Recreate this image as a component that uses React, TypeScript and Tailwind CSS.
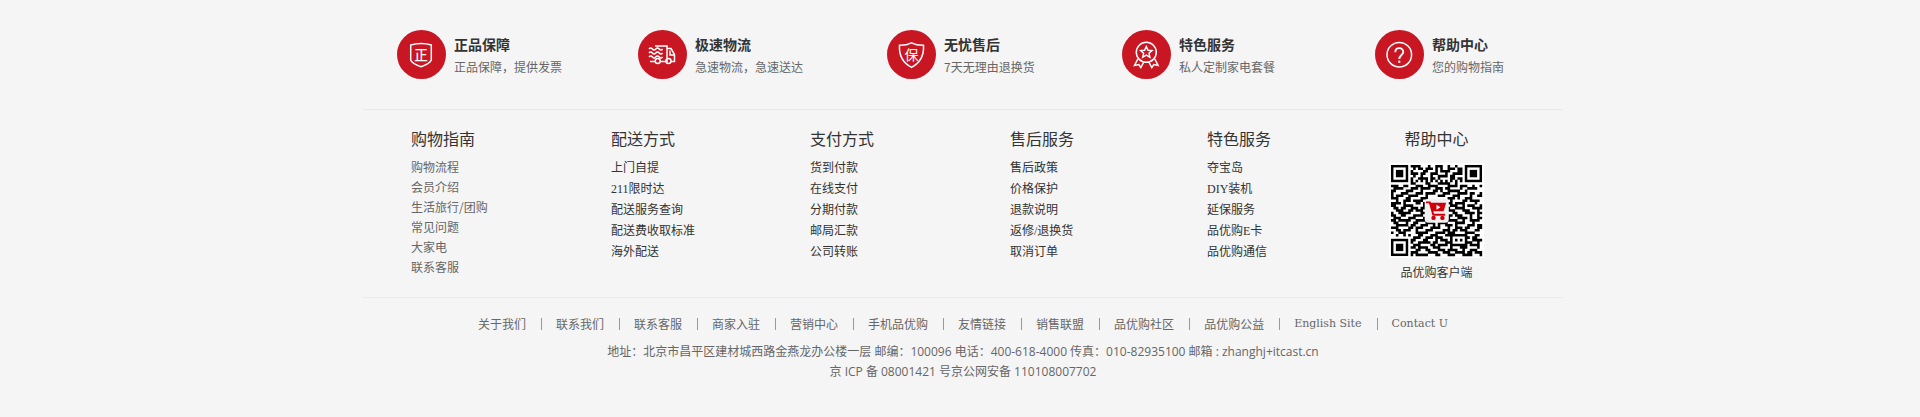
import type { ReactNode } from "react";

const SANS = "font-['Open_Sans','Noto_Sans_CJK_SC',sans-serif]";
const CJK = "font-['Noto_Sans_CJK_SC',sans-serif]";
const SERIF = "font-['Liberation_Serif','Noto_Sans_CJK_SC',serif]";

const shieldIcon = (
  <>
    <path d="M13.7 15Q24.5 12 34.3 15V30Q33 33.5 24 36.7Q15 33.5 13.7 30Z" />
    <text x="24" y="29.5" fontSize="13.5" textAnchor="middle" fill="#fff" stroke="none" fontWeight="500">
      正
    </text>
  </>
);

const truckIcon = (
  <>
    <path d="M17 16H29V31.5H22.5M29 18.5H33L36.5 24.5V31.5H33M28 31.5H29M12 31.5H17" />
    <path d="M32 20.5V25H36" />
    <circle cx="19.7" cy="31" r="2.5" />
    <circle cx="30.5" cy="31" r="2.5" />
    <path d="M11 19q1.7-2 3.4 0t3.4 0t3.400 0t3.400 0M11 23q1.700-2 3.400 0t3.400 0t3.400 0t3.400 0M11 27q1.700-2 3.400 0t3.400 0t3.400 0t3.400 0" />
  </>
);

const warrantyIcon = (
  <>
    <path d="M24.5 12.8Q30 15.5 36.5 15.2Q37.5 30.5 24.5 37.3Q11.5 30.5 12.5 15.2Q19 15.5 24.5 12.8Z" />
    <text x="24.5" y="29.5" fontSize="14" textAnchor="middle" fill="#fff" stroke="none">
      保
    </text>
  </>
);

const medalIcon = (
  <>
    <circle cx="24.3" cy="22.3" r="10" />
    <path d="M24.3 16.5l1.7 3.7l4 .4l-3 2.7l.9 4l-3.6-2.1l-3.6 2.1l.9-4l-3-2.7l4-.4z" />
    <path d="M15.8 29L12.5 35.500L16.800 34.600L18.800 37.500L21.800 32M32.800 29L36.100 35.500L31.800 34.600L29.800 37.500L26.800 32" />
  </>
);

const helpIcon = (
  <>
    <circle cx="24.3" cy="24.7" r="12.3" />
    <path strokeWidth="1.8" d="M20.3 22.2C20.3 16.8 28.3 16.8 28.3 22C28.3 25 24.3 25.2 24.3 29" />
    <path strokeWidth="2" d="M24.3 30.6V32.8" />
  </>
);

const services: { title: string; text: string; icon: ReactNode }[] = [
  { title: "正品保障", text: "正品保障，提供发票", icon: shieldIcon },
  { title: "极速物流", text: "急速物流，急速送达", icon: truckIcon },
  { title: "无忧售后", text: "7天无理由退换货", icon: warrantyIcon },
  { title: "特色服务", text: "私人定制家电套餐", icon: medalIcon },
  { title: "帮助中心", text: "您的购物指南", icon: helpIcon },
];

const guide = {
  title: "购物指南",
  links: ["购物流程", "会员介绍", "生活旅行/团购", "常见问题", "大家电", "联系客服"],
};

const columns = [
  { title: "配送方式", links: ["上门自提", "211限时达", "配送服务查询", "配送费收取标准", "海外配送"] },
  { title: "支付方式", links: ["货到付款", "在线支付", "分期付款", "邮局汇款", "公司转账"] },
  { title: "售后服务", links: ["售后政策", "价格保护", "退款说明", "返修/退换货", "取消订单"] },
  { title: "特色服务", links: ["夺宝岛", "DIY装机", "延保服务", "品优购E卡", "品优购通信"] },
];

const siteLinks = [
  "关于我们", "联系我们", "联系客服", "商家入驻", "营销中心", "手机品优购",
  "友情链接", "销售联盟", "品优购社区", "品优购公益",
];

const modules = [
  "0000000011110001001110010010000000000",
  "0000000001011011101010011101100000000",
  "0000000010000110001011110001100000000",
  "0000000011101100111000100111100000000",
  "0000000001001000100111101100000000000",
  "0000000010011110110100001101100000000",
  "0000000010101010101010101010100000000",
  "0000000011000011000111110010000000000",
  "1110011000111001111000011110111001001",
  "0111100011101111001110110000100111100",
  "1100001110001000011010011111001000000",
  "1000111000111011110001110001111011001",
  "1011100111100010000111000111000010011",
  "1110001100001110000000011101001110000",
  "0010011101111000000000001000011011110",
  "1111010000110110000000011011110000100",
  "1100011110000110000000001110010111001",
  "0110110011101100000000010011110001111",
  "0011100110111000000000011100011100010",
  "1001111100001110000000000110001111011",
  "1100110001111010000000011011100010010",
  "0111000111000110000000010001111010011",
  "1101111100111100000000011110010011110",
  "0110001001100011110111100011110001000",
  "0011111011001110010100111010000111011",
  "1110000110111000111100010011101100011",
  "0011011100100011100001110110111000110",
  "1001110000111110001111011100001111000",
  "0010010100011000111000111111111000110",
  "0000000001110011101110001000001101100",
  "0000000011000110001011101010101001111",
  "0000000010011111011000111000001110010",
  "0000000001110000110111101111111011110",
  "0000000011011110011100001000111000010",
  "0000000000110011000111011110010011100",
  "0000000011100001111001110011110110111",
  "0000000010111110001100011100011110001",
];

const finders = [[0, 0], [30, 0], [0, 30]];

function QrCode() {
  return (
    <svg viewBox="-0.8 -0.8 38.6 38.6" className="h-[95px] w-[95px] bg-white" role="img" aria-label="品优购客户端">
      <path
        fill="#000"
        d={modules
          .flatMap((row, y) => row.split("").map((bit, x) => (bit === "1" ? `M${x} ${y}h1.05v1.05h-1.05z` : "")))
          .join("")}
      />
      {finders.map(([x, y]) => (
        <g key={`${x}-${y}`}>
          <rect x={x + 0.5} y={y + 0.5} width="6" height="6" fill="#fff" stroke="#000" />
          <rect x={x + 2} y={y + 2} width="3" height="3" fill="#000" />
        </g>
      ))}
      <rect x="13.7" y="13.7" width="9.8" height="9.8" rx="1.5" fill="#f1f1f1" />
      <path d="M14.2 15.2h1.6l1.4 5h4.8" fill="none" stroke="#d0000b" strokeWidth=".8" />
      <path d="M15.8 15.4h6.600l-1 3.400h-4.700z" fill="#d0000b" />
      <path d="M18.5 16.200v2l1.600-1z" fill="#fff" />
      <circle cx="17.300" cy="21.500" r=".9" fill="#d0000b" />
      <circle cx="20.900" cy="21.500" r=".9" fill="#d0000b" />
    </svg>
  );
}

export default function App() {
  return (
    <footer className={`min-h-screen bg-[#f5f5f5] pl-[6px] text-xs text-[#666] ${CJK}`}>
      <div className="mx-auto max-w-[1200px]">
        <ul className="grid grid-cols-[241fr_249fr_235fr_253fr_188fr] border-b border-[#eaeaea] pt-[30px] pb-[30px] pl-[34px]">
          {services.map((s) => (
            <li key={s.title} className="flex gap-2">
              <svg viewBox="0 0 49 49" className="h-[49px] w-[49px] shrink-0" fill="none" stroke="#fff" strokeWidth="1.5" aria-hidden="true">
                <circle cx="24.5" cy="24.5" r="24.5" fill="#c81623" stroke="none" />
                {s.icon}
              </svg>
              <div className="pt-[3px]">
                <h2 className="text-sm leading-[22px] font-bold text-[#333]">{s.title}</h2>
                <p className="leading-6">{s.text}</p>
              </div>
            </li>
          ))}
        </ul>

        <div className="grid h-[188px] grid-cols-[200fr_199fr_200fr_197fr_182fr_174fr] border-b border-[#eaeaea] pt-4 pl-[48px]">
          <section>
            <h2 className="text-base leading-6 text-[#333]">{guide.title}</h2>
            <ul className="pt-[7px] leading-5">
              {guide.links.map((l) => (
                <li key={l}><a href="#">{l}</a></li>
              ))}
            </ul>
          </section>
          {columns.map((c) => (
            <section key={c.title} className="text-[#333]">
              <h2 className="text-base leading-6">{c.title}</h2>
              <ul className={`pt-2 leading-[21px] ${SERIF}`}>
                {c.links.map((l) => (
                  <li key={l}><a href="#">{l}</a></li>
                ))}
              </ul>
            </section>
          ))}
          <section className="flex w-[95px] flex-col items-center text-[#333]">
            <h2 className="pb-[13px] text-base leading-6">帮助中心</h2>
            <QrCode />
            <p className="pt-1 leading-5">品优购客户端</p>
          </section>
        </div>

        <nav className="flex items-center justify-center pt-4 leading-5">
          {siteLinks.map((l) => (
            <span key={l} className="flex items-center">
              <a href="#">{l}</a>
              <span className="mr-3.5 ml-[15px] h-3 w-px bg-[#999]" />
            </span>
          ))}
          <a href="#" className="font-['DejaVu_Serif',serif] text-[11px] leading-5">English Site</a>
          <span className="mr-3.5 ml-[15px] h-3 w-px bg-[#999]" />
          <a href="#" className="font-['DejaVu_Serif',serif] text-[11px] leading-5">Contact U</a>
        </nav>

        <address className={`pt-2 text-center leading-5 not-italic ${SANS}`}>
          <p>地址：北京市昌平区建材城西路金燕龙办公楼一层 邮编：100096 电话：400-618-4000 传真：010-82935100 邮箱 : zhanghj+itcast.cn</p>
          <p>京 ICP 备 08001421 号京公网安备 110108007702</p>
        </address>
      </div>
    </footer>
  );
}
